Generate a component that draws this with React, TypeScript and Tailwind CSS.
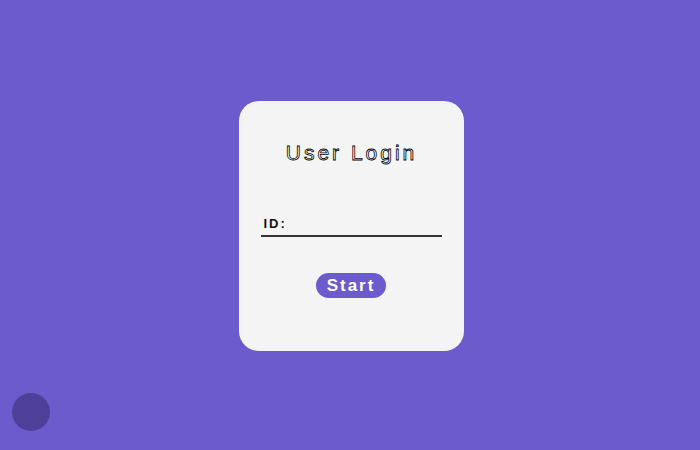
export default function App() {
  return (
    <main className="relative h-[450px] w-[700px] bg-[#6c5bcc] flex items-center justify-center font-['Liberation_Sans',Arial,sans-serif]">
      <div className="ml-[2px] mt-[2px] w-[225px] h-[250px] bg-[#f4f4f4] rounded-[20px] flex flex-col items-center pt-[41px] px-[22px]">
        <h1 className="text-[21px] leading-none tracking-[3px] text-white [-webkit-text-stroke:0.8px_#000] ml-[1px]">
          User Login
        </h1>

        <div className="mt-[48px] w-full border-b-2 border-[#333] pl-[3px]">
          <label className="text-[13px] font-bold tracking-[2px] text-[#111] leading-none">ID:</label>
        </div>

        <button className="mt-[36px] h-[25px] px-[11px] rounded-full bg-[#6c5bcc] text-white font-bold text-[17px] tracking-[2px] leading-none">
          Start
        </button>
      </div>

      <div className="absolute left-[12px] top-[393px] w-[38px] h-[38px] rounded-full bg-[#4e3f99]" />
    </main>
  )
}
